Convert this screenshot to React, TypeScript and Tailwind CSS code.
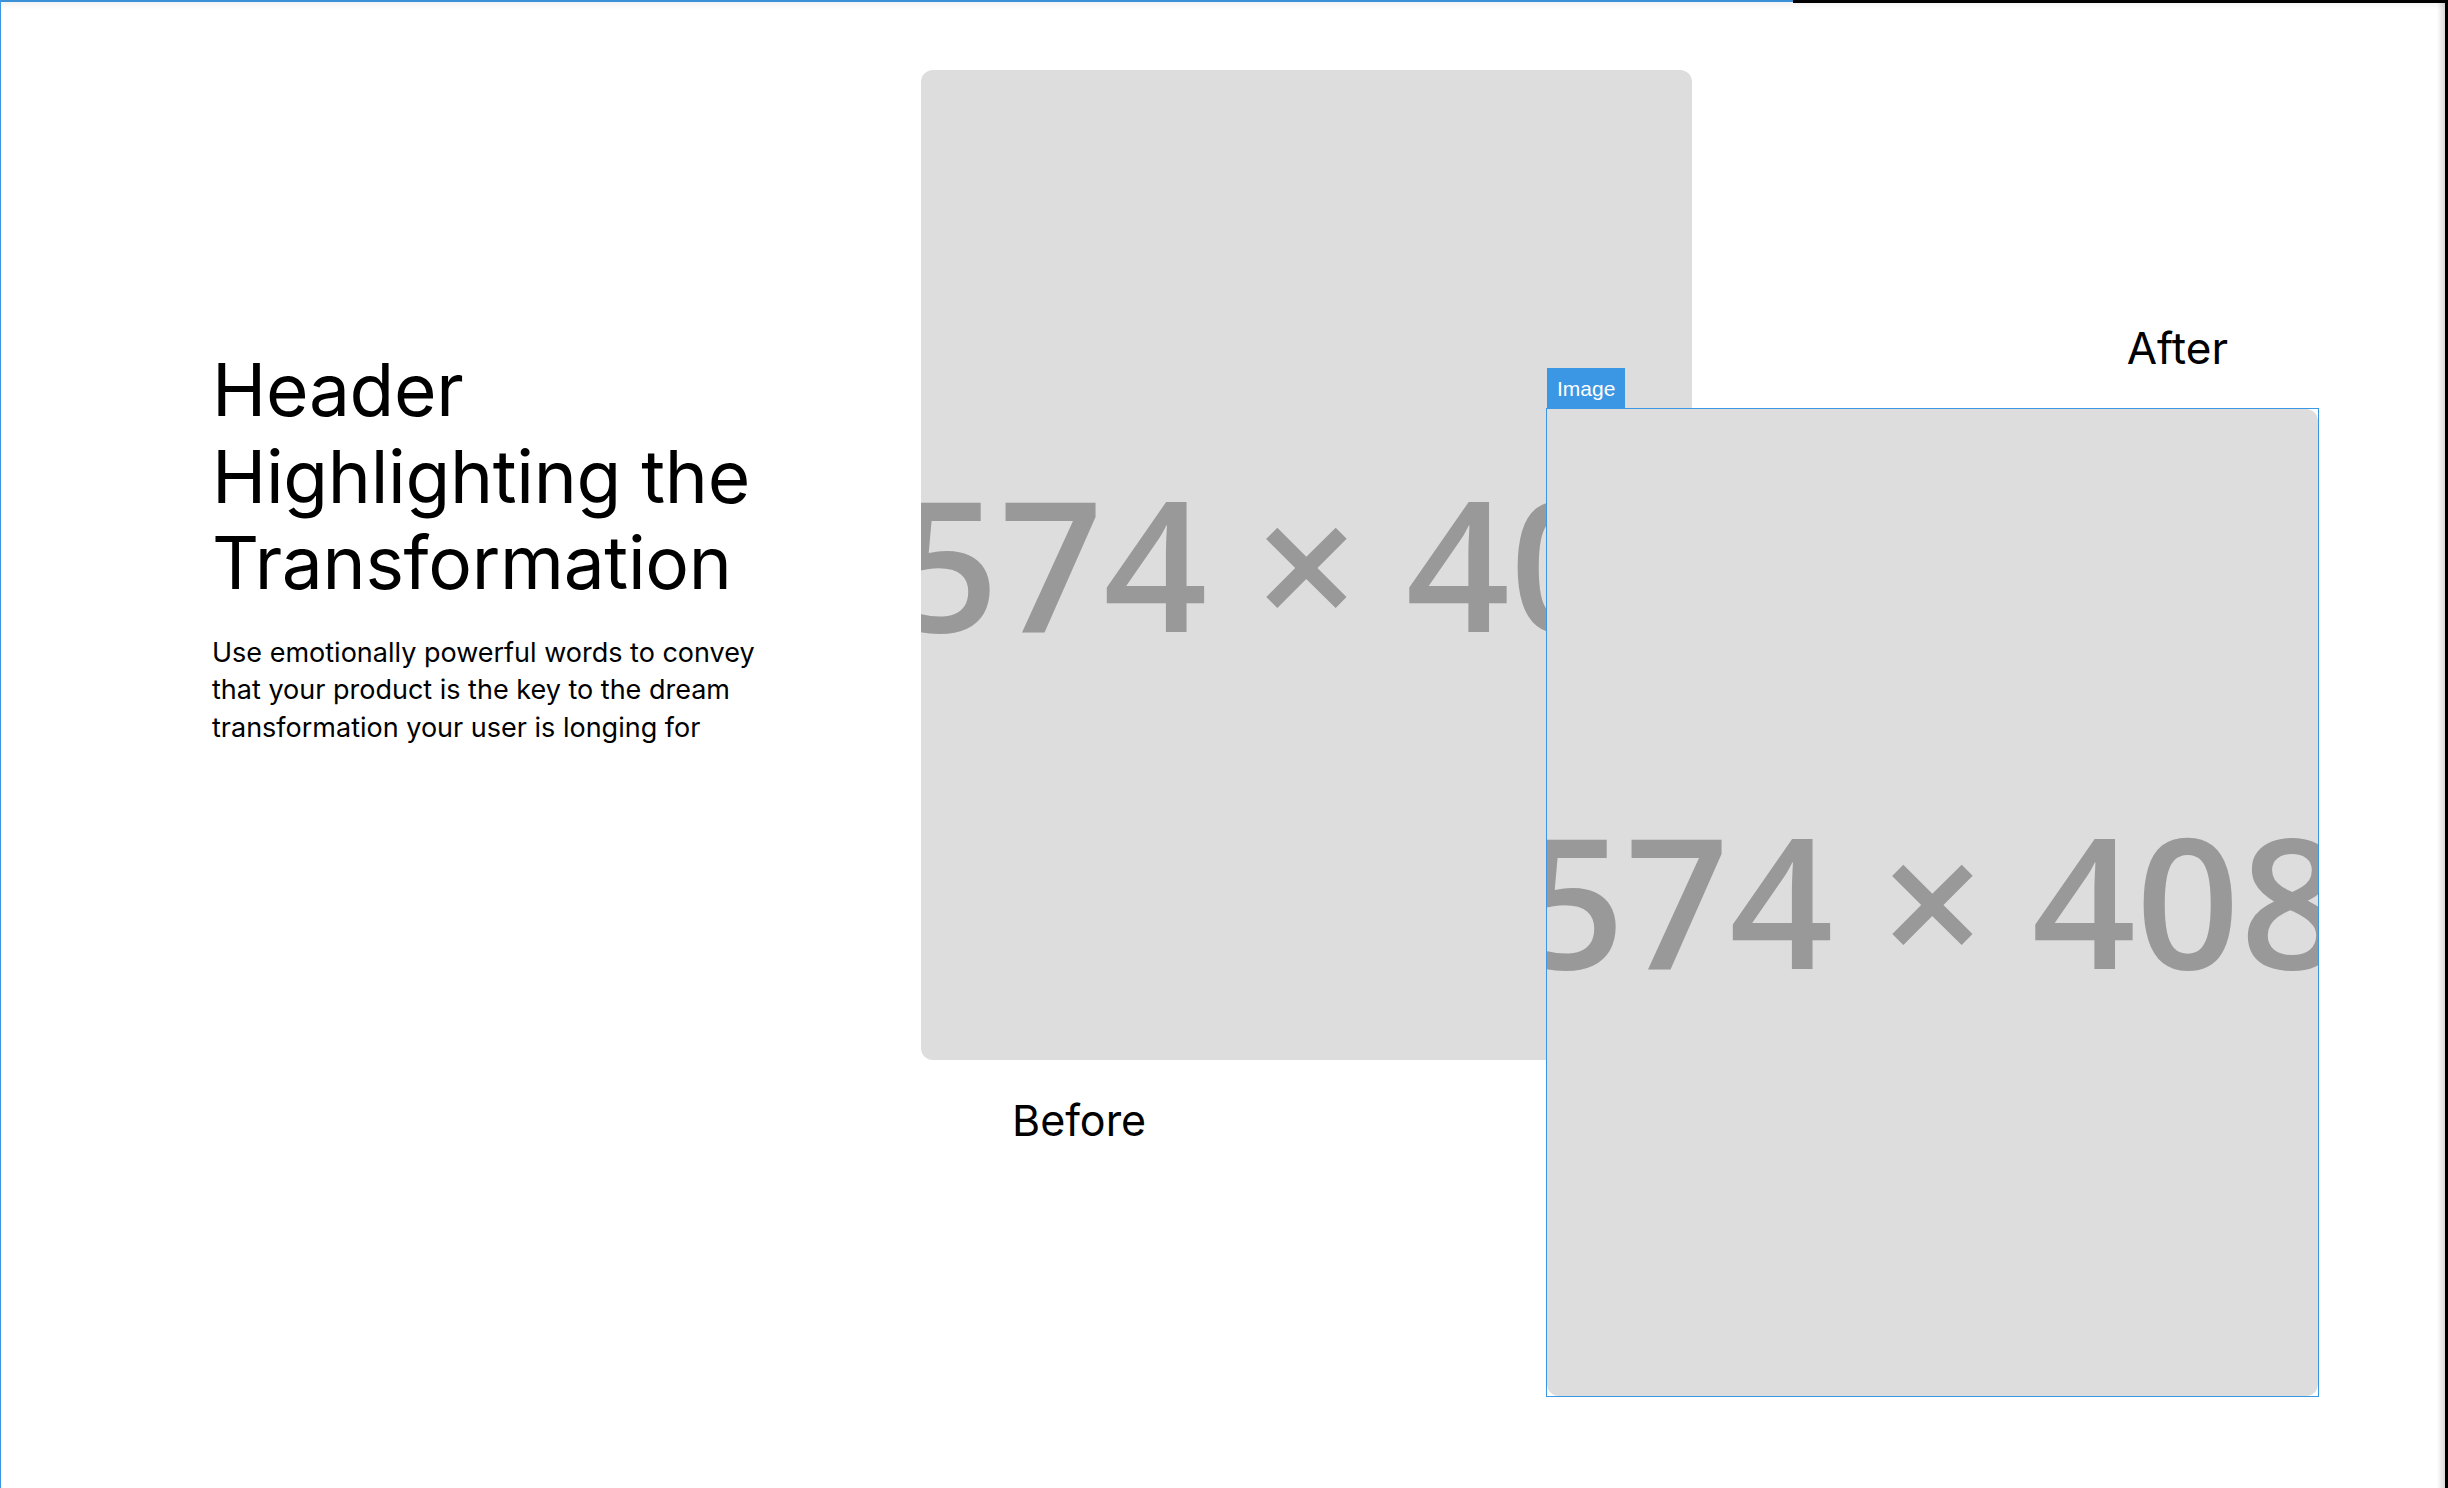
import React from "react";

function Placeholder({ short }: { short?: boolean }) {
  return (
    <div
      className={
        short
          ? "flex h-[987px] w-[771px] items-center justify-center overflow-hidden rounded-xl bg-[#dddddd] pb-[9px]"
          : "flex h-[990px] w-[771px] items-center justify-center overflow-hidden rounded-xl bg-[#dddddd] pb-[9px]"
      }
    >
      <span
        className="whitespace-nowrap text-[182px] font-semibold leading-none text-[#999999]"
        style={{ fontFamily: '"Open Sans", "Noto Sans", sans-serif' }}
      >
        574 × 408
      </span>
    </div>
  );
}

export default function App() {
  return (
    <div
      className="relative h-[1488px] w-[2448px] overflow-hidden bg-white text-black"
      style={{ fontFamily: 'Inter, "Noto Sans", sans-serif' }}
    >
      <div className="flex pl-[212px]">
        <div className="w-[709px] shrink-0 pt-[347px]">
          <h1 className="w-[560px] text-[73px] font-normal leading-[86.6px] tracking-[-0.3px]">
            Header Highlighting the Transformation
          </h1>
          <p className="mt-[27px] w-[560px] text-[27px] leading-[37.5px]">
            Use emotionally powerful words to convey that your product is the key to the dream
            transformation your user is longing for
          </p>
        </div>
        <div className="flex pt-[70px]">
          <div className="flex w-[771px] shrink-0 flex-col">
            <Placeholder />
            <p className="mt-[35px] pl-[91px] text-[43px] leading-[50px]">Before</p>
          </div>
          <div className="ml-[-145px] flex w-[771px] shrink-0 flex-col items-end pt-[253px]">
            <p className="mr-[90px] text-[44px] leading-[50px]">After</p>
            <div className="relative mt-[36px] outline outline-[#3b97e3]">
              <div
                className="absolute bottom-full left-0 flex h-[41px] items-center bg-[#3b97e3] px-[10px] text-[21px] text-white"
                style={{ fontFamily: '"Liberation Sans", Arial, sans-serif' }}
              >
                Image
              </div>
              <Placeholder short />
            </div>
          </div>
        </div>
      </div>

      {/* editor frame decorations */}
      <div className="pointer-events-none absolute left-0 right-0 top-[2px] h-[8px] bg-gradient-to-b from-black/5 to-transparent" />
      <div className="absolute left-0 top-0 h-[2px] w-[1793px] bg-[#3b8fd6]" />
      <div className="absolute left-[1793px] right-0 top-0 h-[3px] bg-black" />
      <div className="absolute bottom-0 left-0 top-0 w-[1px] bg-[#3b97e3]" />
      <div className="pointer-events-none absolute bottom-0 right-[3px] top-0 w-[8px] bg-gradient-to-l from-black/15 to-transparent" />
      <div className="absolute bottom-0 right-0 top-0 w-[3px] bg-black" />
    </div>
  );
}
